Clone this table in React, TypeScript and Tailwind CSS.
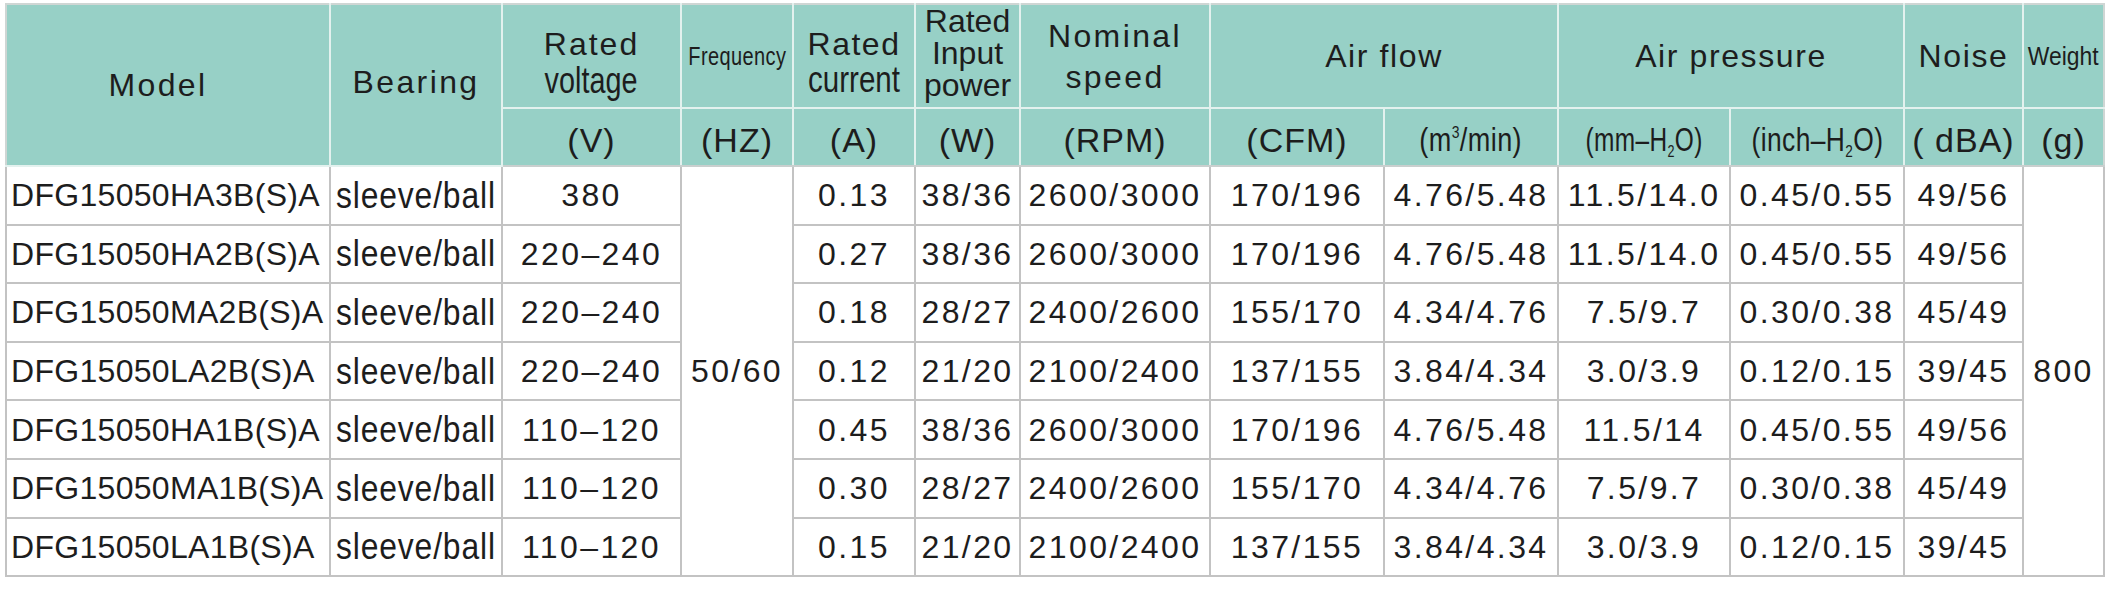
// Fan spec sheet — DFG15050 series, rendered as a plain bordered table.

const rows = [
  ["DFG15050HA3B(S)A", "380", "0.13", "38/36", "2600/3000", "170/196", "4.76/5.48", "11.5/14.0", "0.45/0.55", "49/56"],
  ["DFG15050HA2B(S)A", "220–240", "0.27", "38/36", "2600/3000", "170/196", "4.76/5.48", "11.5/14.0", "0.45/0.55", "49/56"],
  ["DFG15050MA2B(S)A", "220–240", "0.18", "28/27", "2400/2600", "155/170", "4.34/4.76", "7.5/9.7", "0.30/0.38", "45/49"],
  ["DFG15050LA2B(S)A", "220–240", "0.12", "21/20", "2100/2400", "137/155", "3.84/4.34", "3.0/3.9", "0.12/0.15", "39/45"],
  ["DFG15050HA1B(S)A", "110–120", "0.45", "38/36", "2600/3000", "170/196", "4.76/5.48", "11.5/14", "0.45/0.55", "49/56"],
  ["DFG15050MA1B(S)A", "110–120", "0.30", "28/27", "2400/2600", "155/170", "4.34/4.76", "7.5/9.7", "0.30/0.38", "45/49"],
  ["DFG15050LA1B(S)A", "110–120", "0.15", "21/20", "2100/2400", "137/155", "3.84/4.34", "3.0/3.9", "0.12/0.15", "39/45"],
];

const th = "border-2 border-[#e3f1ee] bg-[#97d0c6] p-0 text-center align-middle font-normal";
const th2 = "border-2 border-[#e3f1ee] border-b-[#c9cfce] bg-[#97d0c6] p-0 pt-[5px] text-center align-middle font-normal";
const cell = "border-2 border-[#c3c3c3] p-0 align-middle text-[32px] leading-none";
const num = `${cell} text-center tracking-[2.4px]`;
const model = `${cell} text-left pl-[4px] tracking-[0.3px]`;

// the sheet uses a condensed face in places; squeeze regular Liberation Sans instead.
// flex + justify-center keeps the unscaled box centred even when it is wider than the cell
function Narrow({ children, className }: { children: React.ReactNode; className: string }) {
  return (
    <div className="flex justify-center">
      <span className={`inline-block shrink-0 whitespace-nowrap origin-center ${className}`}>{children}</span>
    </div>
  );
}

function Sub2() {
  return <span className="text-[17px] relative top-[6px]">2</span>;
}

export default function App() {
  return (
    <div className="w-[2117px] h-[604px] bg-white pt-[3px] pl-[5px] font-['Liberation_Sans',Arial,sans-serif] text-[#1d1d1d]">
      <table className="table-fixed border-collapse w-[2098px]">
        <colgroup>
          <col className="w-[324px]" />
          <col className="w-[172px]" />
          <col className="w-[179px]" />
          <col className="w-[112px]" />
          <col className="w-[122px]" />
          <col className="w-[105px]" />
          <col className="w-[190px]" />
          <col className="w-[174px]" />
          <col className="w-[174px]" />
          <col className="w-[172px]" />
          <col className="w-[174px]" />
          <col className="w-[119px]" />
          <col className="w-[81px]" />
        </colgroup>
        <thead>
          <tr className="h-[103px]">
            <th rowSpan={2} className={`${th} border-l-[#cfd6d4] border-t-[#cfd6d4] text-[32px] tracking-[2.4px] leading-none pr-[20px]`}>Model</th>
            <th rowSpan={2} className={`${th} border-t-[#cfd6d4] text-[32px] tracking-[2.4px] leading-none pb-[6px]`}>Bearing</th>
            <th className={`${th} border-t-[#cfd6d4]`}>
              <div className="flex flex-col items-center pt-[14px]">
                <span className="text-[32px] tracking-[2px] leading-[36px]">Rated</span>
                <Narrow className="text-[36px] leading-[38px] scale-x-[0.8]">voltage</Narrow>
              </div>
            </th>
            <th className={`${th} border-t-[#cfd6d4]`}>
              <Narrow className="text-[25px] leading-none scale-x-[0.8] tracking-[0.5px]">Frequency</Narrow>
            </th>
            <th className={`${th} border-t-[#cfd6d4]`}>
              <div className="flex flex-col items-center pt-[12px]">
                <span className="text-[32px] tracking-[1.5px] leading-[36px]">Rated</span>
                <Narrow className="text-[36px] leading-[36px] scale-x-[0.82]">current</Narrow>
              </div>
            </th>
            <th className={`${th} border-t-[#cfd6d4]`}>
              <div className="flex flex-col items-center text-[32px] leading-[32px] pb-[6px]">
                <span>Rated</span>
                <span>Input</span>
                <span>power</span>
              </div>
            </th>
            <th className={`${th} border-t-[#cfd6d4]`}>
              <div className="flex flex-col items-center text-[32px] tracking-[2.4px] leading-[41px] pt-[2px]">
                <span>Nominal</span>
                <span>speed</span>
              </div>
            </th>
            <th colSpan={2} className={`${th} border-t-[#cfd6d4] text-[32px] tracking-[1.6px] leading-none`}>Air flow</th>
            <th colSpan={2} className={`${th} border-t-[#cfd6d4] text-[32px] tracking-[1.6px] leading-none`}>Air pressure</th>
            <th className={`${th} border-t-[#cfd6d4] text-[32px] tracking-[1.6px] leading-none`}>Noise</th>
            <th className={`${th} border-t-[#cfd6d4] border-r-[#cfd6d4]`}>
              <Narrow className="text-[26px] leading-none scale-x-[0.88]">Weight</Narrow>
            </th>
          </tr>
          <tr className="h-[58px] text-[34px] tracking-[1px] leading-none">
            <th className={th2}>(V)</th>
            <th className={th2}>(HZ)</th>
            <th className={th2}>(A)</th>
            <th className={th2}>(W)</th>
            <th className={th2}>(RPM)</th>
            <th className={th2}>(CFM)</th>
            <th className={th2}>
              <Narrow className="text-[33px] tracking-[0.5px] scale-x-[0.82]">
                (m<span className="text-[17px] relative top-[-13px]">3</span>/min)
              </Narrow>
            </th>
            <th className={th2}>
              <Narrow className="text-[33px] tracking-[0.5px] scale-x-[0.74]">
                (mm–H<Sub2 />O)
              </Narrow>
            </th>
            <th className={th2}>
              <Narrow className="text-[33px] tracking-[0.5px] scale-x-[0.8]">
                (inch–H<Sub2 />O)
              </Narrow>
            </th>
            <th className={th2}>( dBA)</th>
            <th className={`${th2} border-r-[#cfd6d4]`}>(g)</th>
          </tr>
        </thead>
        <tbody>
          {rows.map((r, i) => (
            <tr key={r[0]} className="h-[58.6px]">
              <td className={model}>{r[0]}</td>
              <td className={cell}>
                <Narrow className="text-[37px] tracking-[1px] scale-x-[0.86]">sleeve/ball</Narrow>
              </td>
              <td className={num}>{r[1]}</td>
              {i === 0 && (
                <td rowSpan={7} className={num}>50/60</td>
              )}
              <td className={num}>{r[2]}</td>
              <td className={num}>{r[3]}</td>
              <td className={num}>{r[4]}</td>
              <td className={num}>{r[5]}</td>
              <td className={num}>{r[6]}</td>
              <td className={num}>{r[7]}</td>
              <td className={num}>{r[8]}</td>
              <td className={num}>{r[9]}</td>
              {i === 0 && (
                <td rowSpan={7} className={num}>800</td>
              )}
            </tr>
          ))}
        </tbody>
      </table>
    </div>
  );
}
